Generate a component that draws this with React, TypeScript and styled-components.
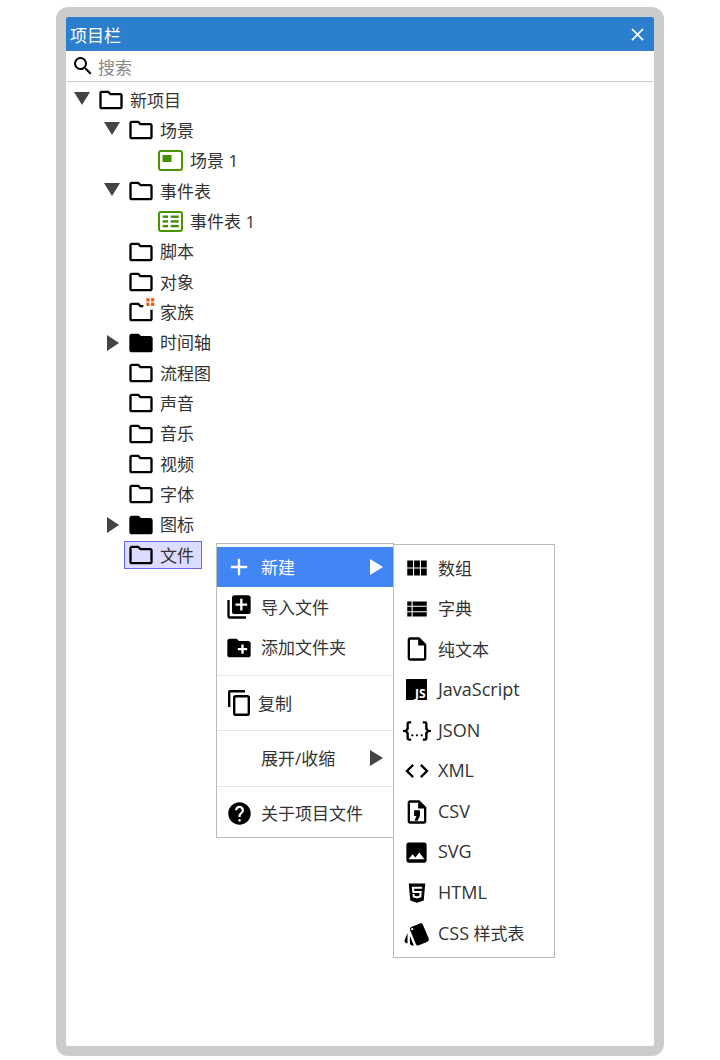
import React from "react";
import styled, { createGlobalStyle } from "styled-components";
import {
  MdAdd,
  MdClose,
  MdCode,
  MdCreateNewFolder,
  MdFolder,
  MdHelp,
  MdImage,
  MdLibraryAdd,
  MdOutlineFolder,
  MdOutlineInsertDriveFile,
  MdSearch,
  MdStyle,
  MdViewList,
  MdViewModule,
} from "react-icons/md";
import { FaHtml5 } from "react-icons/fa";

const GlobalStyle = createGlobalStyle`
  html, body {
    margin: 0;
    padding: 0;
    background: #fff;
  }
  body {
    font-family: "Open Sans", "Noto Sans CJK SC", sans-serif;
    font-size: 17px;
    color: #333;
  }
`;

const Latin = styled.span`
  font-size: 18px;
`;

const ProjectFolder: React.FC<{ dots?: boolean }> = ({ dots }) =>
  dots ? (
    <svg width="28" height="28" viewBox="0 0 24 24" overflow="visible">
      <path
        d="M14 6h-2l-2-2H4c-1.1 0-2 .9-2 2v12c0 1.1.9 2 2 2h16c1.1 0 2-.9 2-2v-8h-2v8H4V6h5.2l2 2H14z"
        fill="#000"
      />
      <g fill="#e8590c">
        <rect x="16.6" y="0.2" width="2.8" height="2.8" />
        <rect x="20.6" y="0.2" width="2.8" height="2.8" />
        <rect x="16.6" y="4" width="2.8" height="2.8" />
        <rect x="20.6" y="4" width="2.8" height="2.8" />
      </g>
    </svg>
  ) : (
    <MdOutlineFolder size={28} color="#000" />
  );

const SceneIcon = () => (
  <svg width="25" height="21" viewBox="0 0 25 21">
    <rect x="1" y="1" width="23" height="19" rx="2" fill="#fff" stroke="#4a9400" strokeWidth="2" />
    <rect x="4.5" y="5" width="9" height="7" fill="#3f8f00" />
  </svg>
);

const SheetIcon = () => (
  <svg width="25" height="21" viewBox="0 0 25 21">
    <rect x="1" y="1" width="23" height="19" rx="2" fill="#fff" stroke="#4a9400" strokeWidth="2" />
    <g fill="#3f8f00">
      <rect x="4.7" y="4.5" width="5.3" height="2.4" />
      <rect x="12.7" y="4.5" width="8" height="2.4" />
      <rect x="4.7" y="9.2" width="5.3" height="2.4" />
      <rect x="12.7" y="9.2" width="8" height="2.4" />
      <rect x="4.7" y="13.9" width="5.3" height="2.4" />
      <rect x="12.7" y="13.9" width="8" height="2.4" />
    </g>
  </svg>
);

const CopyIcon = () => (
  <svg width="22" height="26" viewBox="0 0 22 26">
    <path d="M0 2c0-1.1.9-2 2-2h15v2.4H2.4V17H0z" fill="#000" />
    <rect x="6.2" y="6.2" width="14.6" height="18.6" rx="1.6" fill="none" stroke="#000" strokeWidth="2.4" />
  </svg>
);

const JsIcon = () => (
  <svg width="22" height="22" viewBox="0 0 22 22">
    <rect width="21" height="21" fill="#000" />
    <text x="19.5" y="19" textAnchor="end" fill="#fff" fontFamily="Open Sans" fontWeight="700" fontSize="12">
      JS
    </text>
  </svg>
);

const JsonIcon = () => (
  <svg width="30" height="26" viewBox="0 0 24 24" preserveAspectRatio="none">
    <path
      d="M5,3H7V5H5V10A2,2 0 0,1 3,12A2,2 0 0,1 5,14V19H7V21H5C3.93,20.73 3,20.1 3,19V15A2,2 0 0,0 1,13H0V11H1A2,2 0 0,0 3,9V5A2,2 0 0,1 5,3M19,3A2,2 0 0,1 21,5V9A2,2 0 0,0 23,11H24V13H23A2,2 0 0,0 21,15V19A2,2 0 0,1 19,21H17V19H19V14A2,2 0 0,1 21,12A2,2 0 0,1 19,10V5H17V3H19M12,15A1,1 0 0,1 13,16A1,1 0 0,1 12,17A1,1 0 0,1 11,16A1,1 0 0,1 12,15M8,15A1,1 0 0,1 9,16A1,1 0 0,1 8,17A1,1 0 0,1 7,16A1,1 0 0,1 8,15M16,15A1,1 0 0,1 17,16A1,1 0 0,1 16,17A1,1 0 0,1 15,16A1,1 0 0,1 16,15Z"
      fill="#000"
    />
  </svg>
);

const CsvIcon = () => (
  <svg width="28" height="28" viewBox="0 0 24 24">
    <path
      d="M6 2h8l6 6v12c0 1.1-.9 2-2 2H6c-1.1 0-2-.9-2-2V4c0-1.1.9-2 2-2zm0 2v16h12V9h-5V4z"
      fill="#000"
      fillRule="evenodd"
    />
    <path d="M9.5 10.5h5v5L12.5 19.5h-2.6l1.6-4H9.5z" fill="#000" />
  </svg>
);

type Arrow = "open" | "closed";

const tree: {
  label: string;
  depth: number;
  arrow?: Arrow;
  icon: React.ReactNode;
  selected?: boolean;
}[] = [
  { label: "新项目", depth: 0, arrow: "open", icon: <ProjectFolder /> },
  { label: "场景", depth: 1, arrow: "open", icon: <ProjectFolder /> },
  { label: "场景 1", depth: 2, icon: <SceneIcon /> },
  { label: "事件表", depth: 1, arrow: "open", icon: <ProjectFolder /> },
  { label: "事件表 1", depth: 2, icon: <SheetIcon /> },
  { label: "脚本", depth: 1, icon: <ProjectFolder /> },
  { label: "对象", depth: 1, icon: <ProjectFolder /> },
  { label: "家族", depth: 1, icon: <ProjectFolder dots /> },
  { label: "时间轴", depth: 1, arrow: "closed", icon: <MdFolder size={28} color="#000" /> },
  { label: "流程图", depth: 1, icon: <ProjectFolder /> },
  { label: "声音", depth: 1, icon: <ProjectFolder /> },
  { label: "音乐", depth: 1, icon: <ProjectFolder /> },
  { label: "视频", depth: 1, icon: <ProjectFolder /> },
  { label: "字体", depth: 1, icon: <ProjectFolder /> },
  { label: "图标", depth: 1, arrow: "closed", icon: <MdFolder size={28} color="#000" /> },
  { label: "文件", depth: 1, icon: <ProjectFolder />, selected: true },
];

const subItems: { key: string; label: React.ReactNode; icon: React.ReactNode }[] = [
  { key: "array", label: "数组", icon: <MdViewModule size={26} color="#000" /> },
  { key: "dict", label: "字典", icon: <MdViewList size={26} color="#000" /> },
  { key: "text", label: "纯文本", icon: <MdOutlineInsertDriveFile size={28} color="#000" /> },
  { key: "js", label: <Latin>JavaScript</Latin>, icon: <JsIcon /> },
  { key: "json", label: <Latin>JSON</Latin>, icon: <JsonIcon /> },
  { key: "xml", label: <Latin>XML</Latin>, icon: <MdCode size={28} color="#000" /> },
  { key: "csv", label: <Latin>CSV</Latin>, icon: <CsvIcon /> },
  { key: "svg", label: <Latin>SVG</Latin>, icon: <MdImage size={27} color="#000" /> },
  { key: "html", label: <Latin>HTML</Latin>, icon: <FaHtml5 size={22} color="#000" /> },
  { key: "css", label: <><Latin>CSS</Latin> 样式表</>, icon: <MdStyle size={28} color="#000" /> },
];

export default function App() {
  return (
    <>
      <GlobalStyle />
      <Frame>
        <TitleBar>
          <span>项目栏</span>
          <CloseButton>
            <MdClose size={21} />
          </CloseButton>
        </TitleBar>
        <SearchRow>
          <MdSearch size={24} color="#000" />
          <SearchText>搜索</SearchText>
        </SearchRow>
        <Tree>
          {tree.map((node) => (
            <TreeRow key={node.label} $depth={node.depth}>
              <ArrowSlot>
                {node.arrow === "open" && <OpenArrow />}
                {node.arrow === "closed" && <ClosedArrow />}
              </ArrowSlot>
              <TreeItem $selected={node.selected}>
                <TreeIcon>{node.icon}</TreeIcon>
                <RowLabel>{node.label}</RowLabel>
              </TreeItem>
            </TreeRow>
          ))}
        </Tree>

        <ContextMenu>
          <MenuSection>
            <MenuRow $active>
              <MenuIcon>
                <MdAdd size={28} color="#fff" />
              </MenuIcon>
              <MenuLabel>新建</MenuLabel>
              <MenuArrow $light />
            </MenuRow>
            <MenuRow>
              <MenuIcon>
                <MdLibraryAdd size={28} color="#000" />
              </MenuIcon>
              <MenuLabel>导入文件</MenuLabel>
            </MenuRow>
            <MenuRow>
              <MenuIcon>
                <MdCreateNewFolder size={28} color="#000" />
              </MenuIcon>
              <MenuLabel>添加文件夹</MenuLabel>
            </MenuRow>
          </MenuSection>
          <MenuSection>
            <MenuRow>
              <MenuIcon>
                <CopyIcon />
              </MenuIcon>
              <MenuLabel $tight>复制</MenuLabel>
            </MenuRow>
          </MenuSection>
          <MenuSection>
            <MenuRow>
              <MenuIcon />
              <MenuLabel>展开/收缩</MenuLabel>
              <MenuArrow />
            </MenuRow>
          </MenuSection>
          <MenuSection>
            <MenuRow>
              <MenuIcon>
                <MdHelp size={27} color="#000" />
              </MenuIcon>
              <MenuLabel>关于项目文件</MenuLabel>
            </MenuRow>
          </MenuSection>
        </ContextMenu>

        <SubMenu>
          {subItems.map((item) => (
            <SubRow key={item.key}>
              <SubIcon>{item.icon}</SubIcon>
              <RowLabel>{item.label}</RowLabel>
            </SubRow>
          ))}
        </SubMenu>
      </Frame>
    </>
  );
}

const Frame = styled.div`
  position: relative;
  box-sizing: border-box;
  width: 608px;
  height: 1049px;
  margin: 7px 0 0 56px;
  border: 10px solid #ccc;
  border-radius: 12px;
  background: #fff;
  overflow: hidden;
`;

const TitleBar = styled.div`
  display: flex;
  align-items: center;
  justify-content: space-between;
  height: 34px;
  padding: 0 6px 0 4px;
  background: #2b7fcd;
  color: #fff;
`;

const CloseButton = styled.div`
  display: flex;
  color: #fff;
`;

const SearchRow = styled.div`
  display: flex;
  align-items: center;
  gap: 3px;
  box-sizing: border-box;
  height: 31px;
  padding: 0 0 0 5px;
  border-bottom: 1px solid #ccc;
`;

const SearchText = styled.span`
  color: #888;
`;

const Tree = styled.div`
  padding-top: 3px;
`;

const TreeRow = styled.div<{ $depth: number }>`
  display: flex;
  align-items: center;
  height: 30.33px;
  padding-left: ${({ $depth }) => 3 + $depth * 30}px;
`;

const ArrowSlot = styled.div`
  display: flex;
  align-items: center;
  justify-content: center;
  width: 24px;
`;

const OpenArrow = styled.div`
  width: 0;
  height: 0;
  margin: -3px 0 0 1px;
  border-left: 8.5px solid transparent;
  border-right: 8.5px solid transparent;
  border-top: 13px solid #444;
`;

const ClosedArrow = styled.div`
  width: 0;
  height: 0;
  margin-left: 3px;
  border-top: 8.5px solid transparent;
  border-bottom: 8.5px solid transparent;
  border-left: 12px solid #444;
`;

const TreeItem = styled.div<{ $selected?: boolean }>`
  display: flex;
  align-items: center;
  gap: 5.33px;
  box-sizing: border-box;
  height: 28px;
  margin-left: 1px;
  padding: 0 7px 0 1.67px;
  border: 1px solid ${({ $selected }) => ($selected ? "#6a6ae8" : "transparent")};
  background: ${({ $selected }) => ($selected ? "#dcdcff" : "transparent")};
`;

const TreeIcon = styled.span`
  display: flex;
  align-items: center;
  justify-content: center;
  width: 28px;
  height: 24px;
`;

const RowLabel = styled.span`
  margin-bottom: 2px;
`;

const ContextMenu = styled.div`
  position: absolute;
  left: 150px;
  top: 526px;
  box-sizing: border-box;
  width: 178px;
  padding: 3px 0;
  border: 1px solid #bbb;
  background: #fff;
`;

const MenuSection = styled.div`
  padding: 0 0 7px;
  & + & {
    padding-top: 7px;
    border-top: 1px solid #e5e5e5;
  }
  &:last-child {
    padding-bottom: 0;
  }
`;

const MenuRow = styled.div<{ $active?: boolean }>`
  display: flex;
  align-items: center;
  height: 40.33px;
  padding: 0 10px 0 8px;
  background: ${({ $active }) => ($active ? "#4285f4" : "transparent")};
  color: ${({ $active }) => ($active ? "#fff" : "#333")};
`;

const MenuIcon = styled.span`
  display: flex;
  align-items: center;
  justify-content: center;
  width: 28px;
  height: 28px;
`;

const MenuLabel = styled.span<{ $tight?: boolean }>`
  flex: 1;
  margin: 0 0 2px ${({ $tight }) => ($tight ? 5 : 8)}px;
`;

const MenuArrow = styled.div<{ $light?: boolean }>`
  width: 0;
  height: 0;
  border-top: 8.5px solid transparent;
  border-bottom: 8.5px solid transparent;
  border-left: 13px solid ${({ $light }) => ($light ? "#fff" : "#444")};
`;

const SubMenu = styled.div`
  position: absolute;
  left: 327px;
  top: 527px;
  box-sizing: border-box;
  width: 162px;
  padding: 3px 0;
  border: 1px solid #bbb;
  background: #fff;
`;

const SubRow = styled.div`
  display: flex;
  align-items: center;
  gap: 7.5px;
  height: 40.6px;
  padding-left: 8.5px;
`;

const SubIcon = styled.span`
  display: flex;
  align-items: center;
  justify-content: center;
  width: 28px;
  height: 28px;
`;
